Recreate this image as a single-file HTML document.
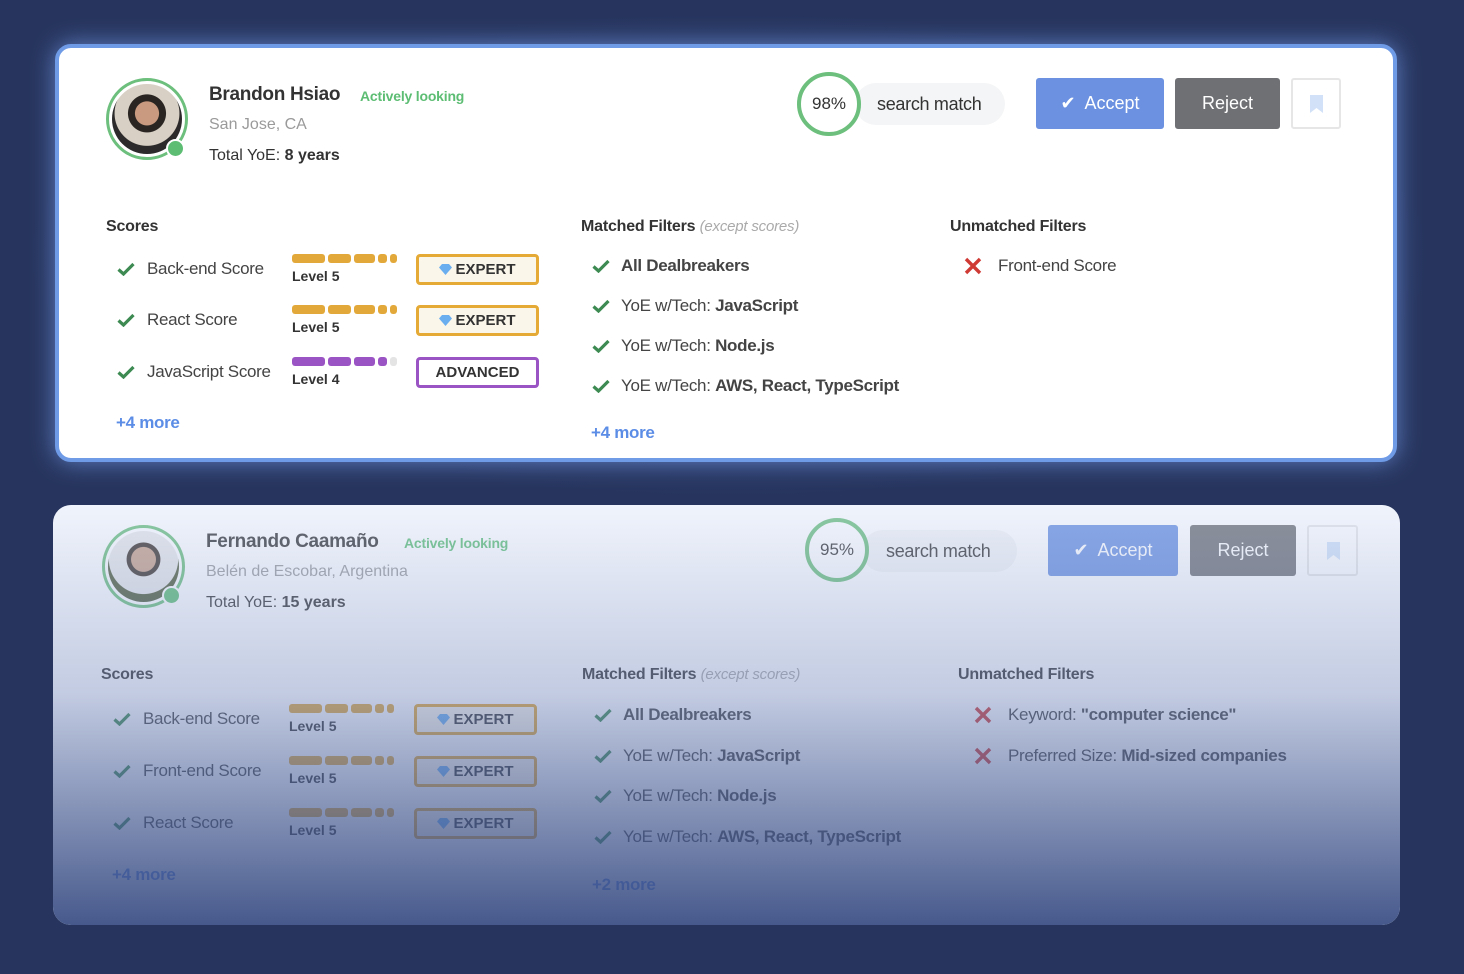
<!DOCTYPE html>
<html><head><meta charset="utf-8"><style>
*{margin:0;padding:0;box-sizing:border-box}
body{width:1464px;height:974px;overflow:hidden;background:#27355e;font-family:"Liberation Sans",sans-serif;position:relative;color:#3a3a3a}
.glow{position:absolute;left:20px;top:10px;width:1420px;height:490px;background:radial-gradient(ellipse at center,rgba(80,110,190,.45),rgba(40,55,100,0) 70%)}
.card{position:absolute;background:#fff;overflow:hidden}
.a{position:absolute;white-space:nowrap}
.name{font-size:19px;color:#333;font-weight:bold;letter-spacing:-.3px}
.act{font-size:14px;color:#5cbd73;font-weight:bold;letter-spacing:-.2px}
.loc{font-size:16px;color:#9a9a9a}
.yoe{font-size:16px;color:#333}
.h{font-size:16px;font-weight:bold;color:#333;letter-spacing:-.2px}
.h i{font-weight:normal;color:#aaa;font-size:15px}
.row{font-size:17px;color:#444;letter-spacing:-.3px}
.chk{position:absolute;width:18px;height:14px}
.lvl{font-size:14px;font-weight:bold;color:#333}
.bars{position:absolute;height:9px}
.bars span{position:absolute;top:0;height:9px;border-radius:3px}
.badge{position:absolute;width:123px;height:31px;border:3px solid #e5a935;border-radius:4px;background:#fbf6ea;font-size:15px;font-weight:bold;text-align:center;line-height:25px;color:#333}
.more{font-size:17px;color:#5b8ce6;font-weight:bold;letter-spacing:-.3px}
.btn{position:absolute;border-radius:3px;color:#fff;font-size:18px;text-align:center}
</style></head><body>
<div class="glow"></div>

<div class="card" style="left:55px;top:44px;width:1342px;height:418px;border:4px solid #6e9ae6;border-radius:16px;box-shadow:0 0 24px rgba(120,160,240,.7)"></div>
<div style="position:absolute;left:0;top:0">
 <div class="a" style="left:106px;top:78px;width:82px;height:82px;border:3px solid #6cbf7c;border-radius:50%;background:#fff"></div>
 <div class="a" style="left:112px;top:84px;width:70px;height:70px;border-radius:50%;background:radial-gradient(circle at 50% 42%,#c99a7f 0 22%,#2a2522 23% 35%,#d8d0c4 36% 60%,#2c2a2a 61%)"></div>
 <div class="a" style="left:166px;top:139px;width:19px;height:19px;border-radius:50%;background:#5cbd73;border:2px solid #fff"></div>
 <div class="a name" style="left:209px;top:84px">Brandon Hsiao</div>
 <div class="a act" style="left:360px;top:88px">Actively looking</div>
 <div class="a loc" style="left:209px;top:116px">San Jose, CA</div>
 <div class="a yoe" style="left:209px;top:147px">Total YoE: <b>8 years</b></div>

 <div class="a" style="left:855px;top:83px;width:150px;height:42px;border-radius:21px;background:#f4f5f6"></div>
 <div class="a" style="left:797px;top:72px;width:64px;height:64px;border-radius:50%;border:4px solid #6cbf7c;background:#fff;text-align:center;line-height:56px;font-size:17px;color:#333">98%</div>
 <div class="a" style="left:877px;top:94px;font-size:18px;color:#333;letter-spacing:-.3px">search match</div>
 <div class="btn" style="left:1036px;top:78px;width:128px;height:51px;background:#6b91e0;line-height:51px">✔&nbsp; Accept</div>
 <div class="btn" style="left:1175px;top:78px;width:105px;height:51px;background:#6f7074;line-height:51px">Reject</div>
 <div class="a" style="left:1291px;top:78px;width:50px;height:51px;border:2px solid #e6e6e6;border-radius:3px;background:#fff"><svg style="position:absolute;left:17px;top:15px" width="13" height="18"><path d="M0 0H13V18L6.5 13L0 18Z" fill="#d2e1f8"/></svg></div>

 <div class="a h" style="left:106px;top:218px">Scores</div>
 <div class="a h" style="left:581px;top:218px">Matched Filters <i>(except scores)</i></div>
 <div class="a h" style="left:950px;top:218px">Unmatched Filters</div>
</div>
<div id="r1"></div>

<div class="card" style="left:53px;top:505px;width:1347px;height:420px;border-radius:18px;background:#fff"></div>
<div style="position:absolute;left:0;top:0">
 <div class="a" style="left:102px;top:525px;width:83px;height:83px;border:3px solid #6cbf7c;border-radius:50%;background:#fff"></div>
 <div class="a" style="left:108px;top:531px;width:71px;height:71px;border-radius:50%;background:radial-gradient(circle at 50% 40%,#c8a088 0 22%,#3a3028 23% 30%,#e8e8e8 31% 62%,#4e5a38 63%)"></div>
 <div class="a" style="left:162px;top:586px;width:19px;height:19px;border-radius:50%;background:#5cbd73;border:2px solid #fff"></div>
 <div class="a name" style="left:206px;top:531px">Fernando Caamaño</div>
 <div class="a act" style="left:404px;top:535px">Actively looking</div>
 <div class="a loc" style="left:206px;top:563px">Belén de Escobar, Argentina</div>
 <div class="a yoe" style="left:206px;top:594px">Total YoE: <b>15 years</b></div>

 <div class="a" style="left:862px;top:530px;width:155px;height:42px;border-radius:21px;background:#f4f5f6"></div>
 <div class="a" style="left:805px;top:518px;width:64px;height:64px;border-radius:50%;border:4px solid #6cbf7c;background:#fff;text-align:center;line-height:56px;font-size:17px;color:#333">95%</div>
 <div class="a" style="left:886px;top:541px;font-size:18px;color:#333;letter-spacing:-.3px">search match</div>
 <div class="btn" style="left:1048px;top:525px;width:130px;height:51px;background:#6b91e0;line-height:51px">✔&nbsp; Accept</div>
 <div class="btn" style="left:1190px;top:525px;width:106px;height:51px;background:#6f7074;line-height:51px">Reject</div>
 <div class="a" style="left:1307px;top:525px;width:51px;height:51px;border:2px solid #e6e6e6;border-radius:3px;background:#fff"><svg style="position:absolute;left:18px;top:15px" width="13" height="18"><path d="M0 0H13V18L6.5 13L0 18Z" fill="#d2e1f8"/></svg></div>

 <div class="a h" style="left:101px;top:666px">Scores</div>
 <div class="a h" style="left:582px;top:666px">Matched Filters <i>(except scores)</i></div>
 <div class="a h" style="left:958px;top:666px">Unmatched Filters</div>
</div>
<div id="r2"></div>
<div style="position:absolute;left:53px;top:505px;width:1347px;height:420px;border-radius:18px;background:linear-gradient(rgba(205,218,245,.3),rgba(120,140,190,.45) 45%,rgba(55,75,130,.92))"></div>

<script>
const chk=(x,y)=>`<svg class="chk" style="left:${x}px;top:${y}px" viewBox="0 0 18 14"><path d="M1.5 7.5L6.5 12L16.5 2" stroke="#3d8a52" stroke-width="3.2" fill="none"/></svg>`;
const xx=(x,y)=>`<svg class="chk" style="left:${x}px;top:${y}px;width:18px;height:18px" viewBox="0 0 18 18"><path d="M2 2L16 16M16 2L2 16" stroke="#d03a35" stroke-width="3.4"/></svg>`;
const dia=`<svg width="13" height="11" style="vertical-align:-1px;margin-right:3px" viewBox="0 0 13 11"><path d="M3 0H10L13 3.5L6.5 11L0 3.5Z" fill="#6aaef0"/></svg>`;
function bars(x,y,c,n){let w=[[0,33],[36,23],[62,21],[86,9],[98,7]],s=`<div class="bars" style="left:${x}px;top:${y}px">`;w.forEach((b,i)=>s+=`<span style="left:${b[0]}px;width:${b[1]}px;background:${i<n?c:'#e4e4e4'}"></span>`);return s+'</div>';}
function score(bx,y,name,lv,col,n,badge,bcol,bbg,lx,barx,badx){
 return chk(bx,y-7)+`<div class="a row" style="left:${lx}px;top:${y-10}px">${name}</div>`+bars(barx,y-15,col,n)+`<div class="a lvl" style="left:${barx}px;top:${y-1}px">Level ${lv}</div>`+`<div class="badge" style="left:${badx}px;top:${y-15}px;border-color:${bcol};background:${bbg}">${badge}</div>`;}
function filt(x,y,t,ok,o){return (ok?chk(x,y-7):xx(x,y-9))+`<div class="a row" style="left:${x+(o||29)}px;top:${y-10}px">${t}</div>`;}
let s='';
s+=score(117,269,'Back-end Score',5,'#e2a93a',5,dia+'EXPERT','#e5a935','#fbf6ea',147,292,416);
s+=score(117,320,'React Score',5,'#e2a93a',5,dia+'EXPERT','#e5a935','#fbf6ea',147,292,416);
s+=score(117,372,'JavaScript Score',4,'#9b54c4',4,'ADVANCED','#9b54c4','#fff',147,292,416);
s+=`<div class="a more" style="left:116px;top:413px">+4 more</div>`;
s+=filt(592,266,'<b>All Dealbreakers</b>',1)+filt(592,306,'YoE w/Tech: <b>JavaScript</b>',1)+filt(592,346,'YoE w/Tech: <b>Node.js</b>',1)+filt(592,386,'YoE w/Tech: <b>AWS, React, TypeScript</b>',1);
s+=`<div class="a more" style="left:591px;top:423px">+4 more</div>`;
s+=filt(964,266,'Front-end Score',0,34);
document.getElementById('r1').innerHTML=s;
let t='';
t+=score(113,719,'Back-end Score',5,'#e2a93a',5,dia+'EXPERT','#e5a935','#fbf6ea',143,289,414);
t+=score(113,771,'Front-end Score',5,'#e2a93a',5,dia+'EXPERT','#e5a935','#fbf6ea',143,289,414);
t+=score(113,823,'React Score',5,'#e2a93a',5,dia+'EXPERT','#e5a935','#fbf6ea',143,289,414);
t+=`<div class="a more" style="left:112px;top:865px">+4 more</div>`;
t+=filt(594,715,'<b>All Dealbreakers</b>',1)+filt(594,756,'YoE w/Tech: <b>JavaScript</b>',1)+filt(594,796,'YoE w/Tech: <b>Node.js</b>',1)+filt(594,837,'YoE w/Tech: <b>AWS, React, TypeScript</b>',1);
t+=`<div class="a more" style="left:592px;top:875px">+2 more</div>`;
t+=filt(974,715,'Keyword: <b>"computer science"</b>',0,34)+filt(974,756,'Preferred Size: <b>Mid-sized companies</b>',0,34);
document.getElementById('r2').innerHTML=t;
</script>
</body></html>
